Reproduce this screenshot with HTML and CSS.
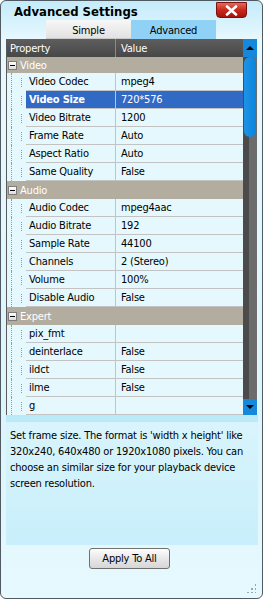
FILE: index.html
```html
<!DOCTYPE html>
<html lang="en">
<head>
  <meta charset="UTF-8">
  <title>Advanced Settings</title>
  <link rel="stylesheet" href="styles.css">
</head>
<body>

  <div class="window">
    <div class="titlebar">
      <h1>Advanced Settings</h1>
      <button class="close" title="Close">
        <svg width="13" height="11" viewBox="0 0 13 11"><path d="M2 1.5 L11 9.5 M11 1.5 L2 9.5" stroke="#fff" stroke-width="2.6" stroke-linecap="round"/></svg>
      </button>
    </div>

    <div class="tabs">
      <div class="tab">Simple</div>
      <div class="tab active">Advanced</div>
    </div>

    <div class="grid">
      <div class="rows">
        <div class="head">
          <div class="hname">Property</div>
          <div class="hval">Value</div>
        </div>

        <div class="cat first"><span class="box"></span>Video</div>
        <div class="row"><div class="gut"></div><div class="name">Video Codec</div><div class="val">mpeg4</div></div>
        <div class="row sel"><div class="gut"></div><div class="name">Video Size</div><div class="val">720*576</div></div>
        <div class="row"><div class="gut"></div><div class="name">Video Bitrate</div><div class="val">1200</div></div>
        <div class="row"><div class="gut"></div><div class="name">Frame Rate</div><div class="val">Auto</div></div>
        <div class="row"><div class="gut"></div><div class="name">Aspect Ratio</div><div class="val">Auto</div></div>
        <div class="row"><div class="gut"></div><div class="name">Same Quality</div><div class="val">False</div></div>

        <div class="cat"><span class="box"></span>Audio</div>
        <div class="row"><div class="gut"></div><div class="name">Audio Codec</div><div class="val">mpeg4aac</div></div>
        <div class="row"><div class="gut"></div><div class="name">Audio Bitrate</div><div class="val">192</div></div>
        <div class="row"><div class="gut"></div><div class="name">Sample Rate</div><div class="val">44100</div></div>
        <div class="row"><div class="gut"></div><div class="name">Channels</div><div class="val">2 (Stereo)</div></div>
        <div class="row"><div class="gut"></div><div class="name">Volume</div><div class="val">100%</div></div>
        <div class="row"><div class="gut"></div><div class="name">Disable Audio</div><div class="val">False</div></div>

        <div class="cat"><span class="box"></span>Expert</div>
        <div class="row"><div class="gut"></div><div class="name">pix_fmt</div><div class="val"></div></div>
        <div class="row"><div class="gut"></div><div class="name">deinterlace</div><div class="val">False</div></div>
        <div class="row"><div class="gut"></div><div class="name">ildct</div><div class="val">False</div></div>
        <div class="row"><div class="gut"></div><div class="name">ilme</div><div class="val">False</div></div>
        <div class="row"><div class="gut"></div><div class="name">g</div><div class="val"></div></div>
      </div>

      <div class="scrollbar">
        <div class="arrow up"></div>
        <div class="track"><div class="thumb"></div></div>
        <div class="arrow down"></div>
      </div>
    </div>

    <div class="desc">
      <p>Set frame size. The format is 'width x height' like 320x240, 640x480 or 1920x1080 pixels. You can choose an similar size for your playback device screen resolution.</p>
    </div>

    <div class="footer">
      <button class="apply">Apply To All</button>
    </div>

    <div class="grip"></div>
  </div>

</body>
</html>
```

FILE: styles.css
```css
body {
  margin: 0;
  background: #fff;
  font-family: "DejaVu Sans Condensed", "DejaVu Sans", sans-serif;
  font-size: 11px;
  letter-spacing: -0.2px;
  color: #000;
}

.window {
  position: relative;
  width: 263px;
  height: 599px;
  box-sizing: border-box;
  border: 1px solid #4f5a62;
  border-radius: 6px;
  background: linear-gradient(#c4ebfa 0px, #e9f9fe 40px, #dcf4fc 400px, #e6f9fe 100%);
  display: flex;
  flex-direction: column;
  overflow: hidden;
}

.titlebar {
  height: 19px;
  display: flex;
  align-items: flex-start;
}

.titlebar h1 {
  margin: 4px 0 0 13px;
  font-size: 13px;
  font-weight: bold;
  line-height: 14px;
  letter-spacing: 0;
}

.close {
  margin: 1px 15px 0 auto;
  width: 31px;
  height: 16px;
  padding: 0;
  border: 1px solid #7a1010;
  border-radius: 0 0 4px 4px;
  background: linear-gradient(#e26a5c, #c9291b 50%, #a5150c);
  display: flex;
  align-items: center;
  justify-content: center;
}

.tabs {
  display: flex;
  padding-left: 45px;
  height: 19px;
}

.tab {
  width: 85px;
  text-align: center;
  line-height: 21px;
  background: linear-gradient(#f7f7f7, #e2e2e2);
  border-bottom: 1px solid #c8c8c8;
  box-sizing: border-box;
}

.tab.active {
  background: #8fd2f6;
  border-bottom: none;
}

.grid {
  display: flex;
  margin-left: 5px;
  width: 251px;
  height: 376px;
  border-left: 1px solid #5a5a5a;
  background: #e5f8fd;
}

.rows {
  width: 236px;
  overflow: hidden;
}

.head {
  display: flex;
  height: 18px;
  line-height: 19px;
  color: #fff;
  background: linear-gradient(#5e5e5e, #474747);
}

.hname {
  width: 105px;
  padding-left: 3px;
  border-right: 1px solid #8a8a8a;
}

.hval {
  padding-left: 5px;
}

.cat {
  display: flex;
  align-items: center;
  height: 18px;
  padding-top: 1px;
  box-sizing: border-box;
  color: #fff;
  background: #b3ad9f;
}

.cat.first {
  height: 16px;
}

.box {
  width: 7px;
  height: 7px;
  margin: 0 3px 0 1px;
  border: 1px solid #7d7d7d;
  background: linear-gradient(#fff, #dcdcdc);
  position: relative;
}

.box::after {
  content: "";
  position: absolute;
  left: 1px;
  right: 1px;
  top: 3px;
  height: 1px;
  background: #000;
}

.row {
  display: flex;
  height: 18px;
  line-height: 18px;
}

.gut {
  width: 19px;
  position: relative;
}

.gut::before {
  content: "";
  position: absolute;
  left: 4px;
  top: 0;
  bottom: 0;
  border-left: 1px dotted #9a9a9a;
}

.gut::after {
  content: "";
  position: absolute;
  left: 14px;
  top: 5px;
  width: 4px;
  height: 9px;
  border-left: 1px dotted #9a9a9a;
}

.name {
  width: 86px;
  padding-left: 3px;
  border-right: 1px solid #c3c3c3;
  border-bottom: 1px solid #c3c3c3;
  white-space: nowrap;
}

.val {
  flex: 1;
  padding-left: 5px;
  border-bottom: 1px solid #c3c3c3;
}

.row.sel .name,
.row.sel .val {
  background: #316ac5;
  color: #fff;
}

.row.sel .name {
  font-weight: bold;
}

.scrollbar {
  width: 14px;
  display: flex;
  flex-direction: column;
  background: linear-gradient(90deg, #4b4b4b 0 6px, #6c6c6c 6px);
}

.arrow {
  height: 18px;
  background: #1588dc;
  position: relative;
}

.arrow::after {
  content: "";
  position: absolute;
  left: 3px;
  border-left: 4px solid transparent;
  border-right: 4px solid transparent;
}

.arrow.up::after {
  top: 7px;
  border-bottom: 4px solid #000;
}

.arrow.down {
  height: 16px;
}

.arrow.down::after {
  top: 6px;
  border-top: 4px solid #000;
}

.track {
  flex: 1;
}

.thumb {
  margin: 0 1px 0 1px;
  height: 80px;
  border-radius: 6px;
  background: linear-gradient(90deg, #1f94e6, #0a84dc);
}

.desc {
  margin-left: 5px;
  width: 252px;
  height: 130px;
  border-top: 7px solid #bae9f8;
  box-sizing: border-box;
  background: linear-gradient(#d9f4fc, #c8effb);
}

.desc p {
  margin: 6px 6px 0 4px;
  line-height: 16px;
}

.footer {
  display: flex;
  justify-content: center;
  padding-top: 3px;
  padding-right: 4px;
}

.apply {
  width: 81px;
  height: 21px;
  padding: 0;
  font-family: inherit;
  font-size: 11px;
  letter-spacing: -0.2px;
  border: 1px solid #707070;
  border-radius: 3px;
  background: linear-gradient(#fdfdfd, #e8e8e8 50%, #d6d6d6);
}

.grip {
  position: absolute;
  right: 6px;
  bottom: 5px;
  width: 10px;
  height: 10px;
  background:
    radial-gradient(circle, #9aa9b0 1px, transparent 1.2px) 0 0 / 4px 4px;
  clip-path: polygon(100% 0, 100% 100%, 0 100%);
}
```
